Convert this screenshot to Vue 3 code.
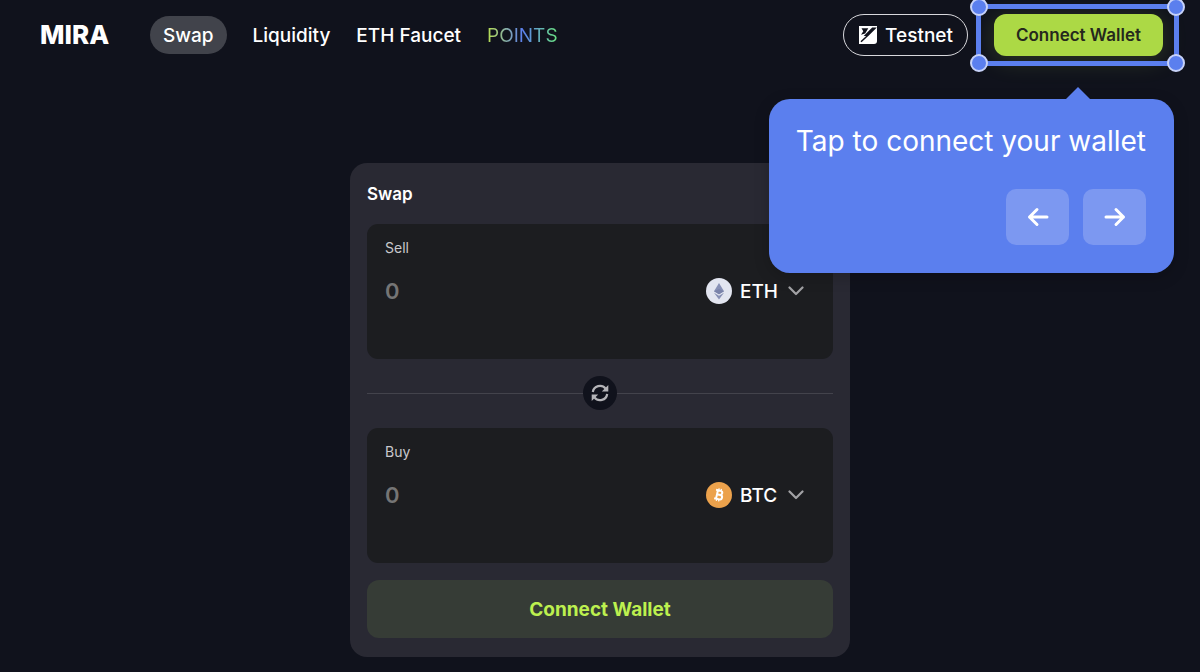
<script setup>
import { reactive, ref } from 'vue'

const links = [
  { label: 'Swap', kind: 'active' },
  { label: 'Liquidity', kind: '' },
  { label: 'ETH Faucet', kind: '' },
  { label: 'POINTS', kind: 'points' },
]
const tokens = ['ETH', 'BTC']
const sell = reactive({ id: 'sell', label: 'Sell', token: 'ETH', amount: '' })
const buy = reactive({ id: 'buy', label: 'Buy', token: 'BTC', amount: '' })
const sides = ref([sell, buy])

function flip() {
  const token = sell.token
  sell.token = buy.token
  buy.token = token
}
</script>

<template>
  <div class="page">
    <header class="topbar">
      <a class="brand" href="#">MIRA</a>
      <nav class="nav">
        <a v-for="link in links" :key="link.label" href="#" :class="['link', link.kind]">{{ link.label }}</a>
      </nav>
      <div class="actions">
        <button class="network" type="button">
          <svg width="18" height="18" viewBox="0 0 18 18" aria-hidden="true">
            <path d="M0 0h18v15a3 3 0 0 1-3 3H0z" fill="#fff" />
            <path d="M2.500 2.300h6.800L6.200 7.400 2 8.800l2.300-3.600z" fill="#10121c" />
            <path d="M2 15.800 9 9.200 M6.500 9.200H9L16 2.300h-2.500z" stroke="#10121c" stroke-width="1.500" fill="#10121c" />
          </svg>
          Testnet
        </button>
        <div class="spot">
          <button class="connect" type="button">Connect Wallet</button>
          <div class="frame" aria-hidden="true">
            <i class="knob tl"></i><i class="knob tr"></i><i class="knob bl"></i><i class="knob br"></i>
          </div>
          <div class="tip" role="dialog" aria-label="Guide">
            <p class="tip-text">Tap to connect your wallet</p>
            <div class="tip-nav">
              <button type="button" aria-label="Previous">
                <svg width="22" height="20" viewBox="0 0 22 20" aria-hidden="true"><path d="M20 10H2.500M10 2.500 2.500 10l7.500 7.500" /></svg>
              </button>
              <button type="button" aria-label="Next">
                <svg width="22" height="20" viewBox="0 0 22 20" aria-hidden="true"><path d="M2 10h17.500M12 2.500l7.500 7.500-7.500 7.500" /></svg>
              </button>
            </div>
          </div>
        </div>
      </div>
    </header>

    <main class="main">
      <section class="card">
        <h1 class="title">Swap</h1>
        <template v-for="(side, i) in sides" :key="side.id">
          <div v-if="i === 1" class="divider">
            <button class="flip" type="button" aria-label="Switch tokens" @click="flip">
              <svg width="18" height="18" viewBox="0 0 18 18" aria-hidden="true">
                <path d="M1.800 8A7.200 7.200 0 0 1 14.600 4.600M16.200 10A7.200 7.200 0 0 1 3.400 13.400" fill="none" stroke="#b4b4b8" stroke-width="2.200" />
                <path d="M17.300 1v6.500h-6.500zM0.700 17v-6.500h6.500z" fill="#b4b4b8" />
              </svg>
            </button>
          </div>
          <div class="panel">
            <label class="label" :for="side.id">{{ side.label }}</label>
            <div class="row">
              <input :id="side.id" v-model="side.amount" class="amount" type="text" inputmode="decimal" placeholder="0" />
              <div class="token">
                <svg v-if="side.token === 'ETH'" width="26" height="26" viewBox="0 0 26 26" aria-hidden="true">
                  <circle cx="13" cy="13" r="13" fill="#e2e5f0" />
                  <path d="M13 5l5 8.300-5 3-5-3z" fill="#8790b5" />
                  <path d="M13 11l5 2.300-5 3-5-3z" fill="#7a83aa" />
                  <path d="M8 14.700l5 3 5-3-5 6.800z" fill="#8790b5" />
                </svg>
                <svg v-else width="26" height="26" viewBox="0 0 26 26" aria-hidden="true">
                  <circle cx="13" cy="13" r="13" fill="#eca24c" />
                  <g transform="rotate(13 13 13)" fill="none" stroke="#fff">
                    <path d="M9 8.600h4.700a2.050 2.050 0 0 1 0 4.100h-3M10.700 12.700h3.600a2.250 2.250 0 0 1 0 4.500H9M10.900 8.600v8.600" stroke-width="2" />
                    <path d="M11.700 6.500v2M14 6.500v2M11.700 17.300v2M14 17.300v2" stroke-width="1.300" />
                  </g>
                </svg>
                <div class="picker">
                  <select v-model="side.token" :aria-label="side.label + ' token'">
                    <option v-for="t in tokens" :key="t">{{ t }}</option>
                  </select>
                  <svg class="chevron" width="16" height="10" viewBox="0 0 16 10" aria-hidden="true"><path d="M1.500 1.500 8 8l6.500-6.500" fill="none" stroke="#a2a2a5" stroke-width="2.200" stroke-linecap="round" stroke-linejoin="round" /></svg>
                </div>
              </div>
            </div>
          </div>
        </template>
        <button class="submit" type="button">Connect Wallet</button>
      </section>
    </main>
  </div>
</template>

<style>
body {
  margin: 0;
  background: #10121c;
}
</style>

<style scoped>
* {
  box-sizing: border-box;
}
.page {
  min-height: 100vh;
  background: #10121c;
  color: #fff;
  font-family: Inter, "Liberation Sans", sans-serif;
}
button,
input,
select {
  margin: 0;
  padding: 0;
  border: 0;
  font-family: inherit;
  color: inherit;
}
a {
  color: inherit;
  text-decoration: none;
}
.topbar {
  display: flex;
  align-items: center;
  height: 70px;
  padding: 0 37px 0 40px;
}
.brand {
  width: 110px;
  font-size: 26px;
  line-height: 38px;
  font-weight: 800;
}
.nav {
  display: flex;
  align-items: center;
  gap: 26px;
}
.link {
  padding-top: 1px;
  font-size: 19px;
  line-height: 37px;
  font-weight: 500;
  white-space: nowrap;
}
.active {
  padding: 1px 13px 0;
  border-radius: 19px;
  background: #41434b;
}
.points {
  background: linear-gradient(90deg, #b8e050, #5b7fee 50%, #6ae37f);
  background-clip: text;
  color: transparent;
  font-weight: 400;
}
.actions {
  display: flex;
  gap: 26px;
  margin-left: auto;
}
.network {
  display: flex;
  align-items: center;
  gap: 8px;
  height: 42px;
  padding: 0 14px 0 15px;
  border: 1px solid #d8d8dc;
  border-radius: 21px;
  background: transparent;
  font-size: 19px;
  font-weight: 500;
}
.spot {
  position: relative;
}
.connect {
  height: 42px;
  padding: 0 22px;
  border-radius: 12px;
  background: #acd945;
  box-shadow: 0 4px 24px rgba(172, 217, 69, 0.2);
  color: #25281d;
  font-size: 17px;
  font-weight: 600;
  white-space: nowrap;
}
.frame {
  position: absolute;
  inset: -10px -16px -10px -18px;
  border: 5px solid #5b7fee;
  pointer-events: none;
}
.knob {
  position: absolute;
  width: 18px;
  height: 18px;
  border: 2px solid #c7d2f8;
  border-radius: 50%;
  background: #5b7fee;
}
.tl,
.tr {
  top: -11px;
}
.bl,
.br {
  bottom: -11px;
}
.tl,
.bl {
  left: -11px;
}
.tr,
.br {
  right: -11px;
}
.tip {
  position: absolute;
  z-index: 2;
  top: 85px;
  right: -11px;
  padding: 22px 28px 28px 27px;
  border-radius: 21px;
  background: #5b7fee;
  box-shadow: 0 4px 16px rgba(0, 0, 0, 0.2);
}
.tip::before {
  content: "";
  position: absolute;
  top: -12px;
  right: 84px;
  width: 24px;
  height: 12px;
  background: #5b7fee;
  clip-path: polygon(50% 0, 100% 100%, 0 100%);
}
.tip-text {
  margin: 0;
  font-size: 28px;
  line-height: 40px;
  white-space: nowrap;
}
.tip-nav {
  display: flex;
  justify-content: flex-end;
  gap: 14px;
  margin-top: 28px;
}
.tip-nav button {
  display: grid;
  place-items: center;
  width: 63px;
  height: 56px;
  border-radius: 10px;
  background: #7c98f1;
}
.tip-nav path {
  fill: none;
  stroke: #fff;
  stroke-width: 3px;
  stroke-linecap: round;
  stroke-linejoin: round;
}
.main {
  display: flex;
  justify-content: center;
  padding: 93px 16px 15px;
}
.card {
  width: 100%;
  max-width: 500px;
  padding: 17px 17px 19px;
  border-radius: 17px;
  background: #292933;
}
.title {
  margin: 0 0 16px;
  font-size: 17px;
  line-height: 28px;
  font-weight: 600;
}
.panel {
  height: 135px;
  padding: 14px 29px 14px 18px;
  border-radius: 11px;
  background: #1c1d20;
}
.label {
  display: block;
  font-size: 14px;
  line-height: 20px;
  color: #c9c9cc;
}
.row {
  display: flex;
  align-items: center;
  justify-content: space-between;
  margin-top: 18px;
}
.amount {
  flex: 1;
  min-width: 0;
  height: 30px;
  background: transparent;
  font-size: 22px;
  font-weight: 600;
  outline: none;
}
.amount::placeholder {
  color: #757575;
}
.token {
  display: flex;
  align-items: center;
  gap: 8px;
}
.picker {
  position: relative;
}
.picker select {
  display: block;
  height: 30px;
  padding-right: 25px;
  appearance: none;
  background: transparent;
  font-size: 19px;
  font-weight: 500;
}
.picker option {
  background: #1c1d20;
}
.chevron {
  position: absolute;
  top: 10px;
  right: 0;
  pointer-events: none;
}
.divider {
  display: flex;
  align-items: center;
  height: 34px;
  margin: 17px 0 18px;
}
.divider::before,
.divider::after {
  content: "";
  flex: 1;
  height: 1px;
  background: #43434c;
}
.flip {
  display: grid;
  place-items: center;
  width: 34px;
  height: 34px;
  border-radius: 50%;
  background: #10121c;
}
.submit {
  display: block;
  width: 100%;
  height: 58px;
  margin-top: 17px;
  border-radius: 12px;
  background: #363c36;
  color: #bdf04f;
  font-size: 19px;
  font-weight: 700;
}
</style>
